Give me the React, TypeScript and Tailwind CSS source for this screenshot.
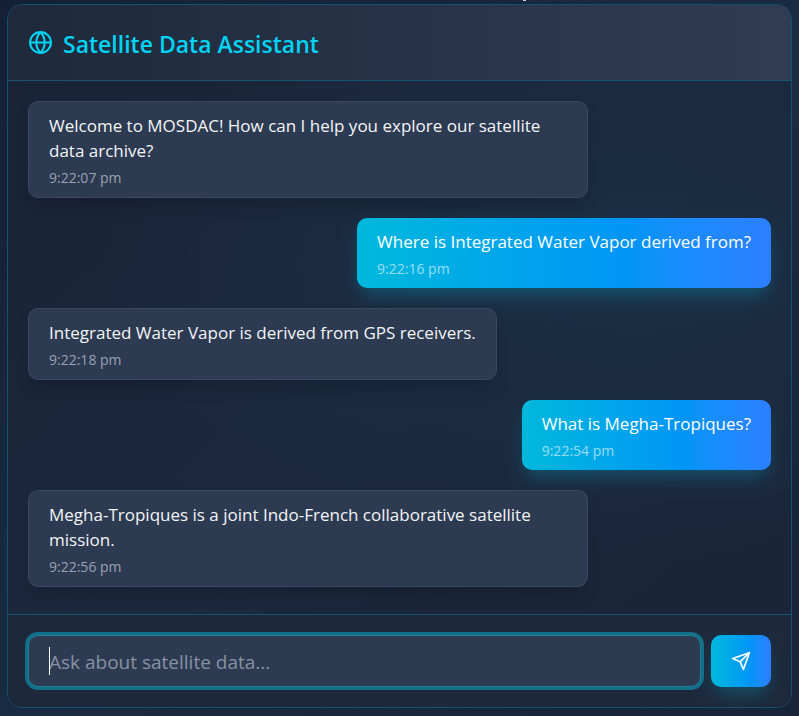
import { FiGlobe, FiSend } from "react-icons/fi";

type Message = { id: number; from: "bot" | "user"; text: string; time: string };

const messages: Message[] = [
  { id: 1, from: "bot", text: "Welcome to MOSDAC! How can I help you explore our satellite data archive?", time: "9:22:07 pm" },
  { id: 2, from: "user", text: "Where is Integrated Water Vapor derived from?", time: "9:22:16 pm" },
  { id: 3, from: "bot", text: "Integrated Water Vapor is derived from GPS receivers.", time: "9:22:18 pm" },
  { id: 4, from: "user", text: "What is Megha-Tropiques?", time: "9:22:54 pm" },
  { id: 5, from: "bot", text: "Megha-Tropiques is a joint Indo-French collaborative satellite mission.", time: "9:22:56 pm" },
];

function Bubble({ message }: { message: Message }) {
  const isUser = message.from === "user";
  return (
    <li className={isUser ? "flex justify-end" : "flex justify-start"}>
      <div
        className={
          isUser
            ? "max-w-[560px] rounded-[10px] bg-linear-to-r from-cyan-500 to-blue-500 px-5 pt-[11px] pb-[9px] text-white shadow-[0_10px_18px_-4px] shadow-cyan-500/30"
            : "max-w-[560px] rounded-[10px] border border-[#394860] bg-[#2d3b52] px-5 pt-[11px] pb-[9px] text-gray-100 shadow-[0_10px_18px_-4px] shadow-black/20"
        }
      >
        <p className="text-[17px] leading-[25px]">{message.text}</p>
        <p className={isUser ? "mt-[5px] text-sm leading-5 text-white/60" : "mt-[5px] text-sm leading-5 text-gray-400"}>
          {message.time}
        </p>
      </div>
    </li>
  );
}

export default function App() {
  return (
    <main className="relative flex min-h-screen flex-col bg-linear-to-br from-[#142036] via-[#192b42] to-[#18243a] px-[7px] pt-1 pb-2 font-['Open_Sans','Noto_Sans',sans-serif]">
      <span className="absolute top-0 left-[523px] h-px w-[3px] bg-gray-300" aria-hidden="true" />
      <section className="flex flex-1 flex-col overflow-hidden rounded-[15px] border border-[#17506a] bg-linear-to-br from-[#1a2337] via-[#1b283d] to-[#1b2438]">
        <header className="flex items-center gap-2.5 border-b border-[#17566e] bg-linear-to-r from-[#1e293b] to-[#2f3c53] px-5 py-[18px] text-cyan-400">
          <FiGlobe className="size-[25px]" aria-hidden="true" />
          <h1 className="pt-1 text-[23px] leading-[35px] font-semibold">Satellite Data Assistant</h1>
        </header>
        <ul className="flex flex-1 flex-col gap-5 bg-radial-[at_80%_35%] from-[#1a2e45] to-transparent to-60% p-5">
          {messages.map((message) => (
            <Bubble key={message.id} message={message} />
          ))}
        </ul>
        <form className="flex gap-2.5 border-t border-[#17506a] bg-[#1d283b] p-5" onSubmit={(e) => e.preventDefault()}>
          <div className="relative min-w-0 flex-1">
            <input
              type="text"
              aria-label="Ask about satellite data"
              placeholder="Ask about satellite data..."
              className="h-[52px] w-full rounded-[10px] border border-[#207e96] bg-[#2d3b52] px-5 pt-0.5 text-[19px] text-white caret-transparent ring-3 ring-[#116f8a] outline-none placeholder:text-[#8791a2]"
            />
            <span className="pointer-events-none absolute inset-y-3 left-[21px] w-px bg-white" aria-hidden="true" />
          </div>
          <button
            type="submit"
            aria-label="Send message"
            className="flex h-[52px] w-[60px] items-center justify-center rounded-[10px] bg-linear-to-r from-cyan-500 to-blue-500 text-white shadow-[0_10px_18px_-4px] shadow-cyan-500/30"
          >
            <FiSend className="size-5" aria-hidden="true" />
          </button>
        </form>
      </section>
    </main>
  );
}
